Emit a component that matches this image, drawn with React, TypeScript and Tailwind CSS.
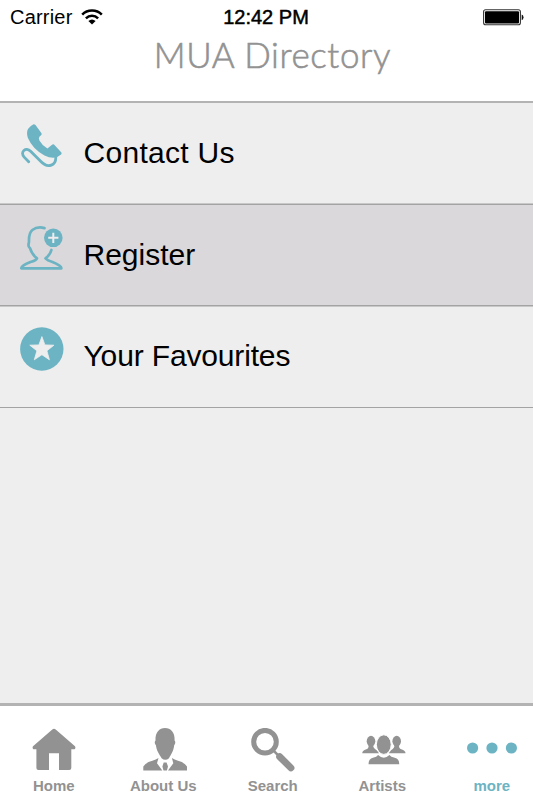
import type { ReactNode } from "react";

const sans = "font-['Liberation_Sans',Arial,sans-serif]";

function WifiIcon() {
  return (
    <svg className="block h-[16px] w-[22px]" viewBox="0 0 22 16" fill="none" stroke="#000" strokeWidth="2.5">
      <path d="M1.2 5.6C6.5.2 15.5.2 20.8 5.6" />
      <path d="M4.9 9.4C8.3 6 13.7 6 17.1 9.4" />
      <path d="M11 15.4 7.4 12Q11 9 14.6 12Z" fill="#000" stroke="none" />
    </svg>
  );
}

function BatteryIcon() {
  return (
    <svg className="block h-[17px] w-[41px]" viewBox="0 0 41 17">
      <rect x="0.6" y="0.8" width="36.8" height="15" rx="2" fill="#fff" stroke="#333" strokeWidth="1.1" />
      <rect x="2" y="2.2" width="34" height="12.2" rx="1" fill="#000" />
      <path d="M38.7 5.4Q40.5 6 40.5 8.3T38.7 11.2Z" fill="#111" />
    </svg>
  );
}

function PhoneIcon() {
  return (
    <svg className="ml-px block h-11 w-[42px]" viewBox="0 0 42 44">
      <path
        d="M12.6.3Q13.7.2 14.5 1L20.5 9.3Q21 10.3 20.3 11L18.6 12.4Q17.2 14 18.4 16.4Q21.2 21.5 26.4 24.4L31.4 20.4Q32.3 20 33 20.6L40.4 28.5Q41 29.5 40.1 30.4L36.2 33.1Q30.5 35 23.5 31.5Q11.8 25.4 6.8 13.8Q5.2 8.5 7 5Q8.5 2.3 12.6.3Z"
        fill="#6cb4c3"
      />
      <path
        d="M7.7 37.8 3.2 33.1C-1.5 28 5 22.4 9.6 27.2L19.4 37C27.2 45.5 35.5 41 34.7 32.5"
        fill="none"
        stroke="#6cb4c3"
        strokeWidth="2.8"
        strokeLinecap="round"
      />
    </svg>
  );
}

function RegisterIcon() {
  return (
    <svg className="block h-11 w-[43px]" viewBox="0 0 43 44">
      <g fill="none" stroke="#6cb4c3" strokeWidth="2.7" strokeLinejoin="round" strokeLinecap="round">
        <path d="M24.5 2.1Q17.5.1 12.3 4Q8.7 7 9 15.5L8.6 18.2Q8 20.5 10 22.2Q11.5 28 17 32.4Q16 34.5 10.5 36Q1.5 39.5 1.3 42.3H41.4Q41.2 39.5 32.5 36Q27.3 34.4 25.5 32.4Q30.2 28.8 31.4 24" />
      </g>
      <circle cx="33.3" cy="11.8" r="9.3" fill="#6cb4c3" />
      <path d="M28.2 11.8h10.2M33.3 6.7v10.2" stroke="#efebee" strokeWidth="2" />
    </svg>
  );
}

function FavouriteIcon() {
  return (
    <svg className="block h-11 w-11" viewBox="0 0 44 44">
      <circle cx="21.8" cy="22" r="21.7" fill="#6cb4c3" />
      <path
        d="M21.9 9.6 24.9 17.9 33.9 18.2 26.9 23.8 29.4 32.8 21.9 27.7 14.3 32.8 16.9 23.8 9.8 18.2 18.9 17.9Z"
        fill="#eee"
        stroke="#eee"
        strokeWidth=".8"
        strokeLinejoin="round"
      />
    </svg>
  );
}

function HomeIcon() {
  return (
    <svg className="ml-px block h-11 w-11" viewBox="0 0 44 44" fill="#929292">
      <path d="M20.3 1.4Q22 .2 23.7 1.4L43 18.3Q44 20 42.6 21.2H39.3V40Q39.3 42 37.3 42H27V25.2H17V42H6.4Q4.4 42 4.4 40V21.2H1.4Q0 20 1 18.3Z" />
    </svg>
  );
}

function AboutIcon() {
  return (
    <svg className="ml-[3px] block h-11 w-11" viewBox="0 0 44 44" fill="#929292">
      <path d="M22 0C27.8 0 32 4.4 31.6 12.4Q33.2 14.4 31.2 17.2C30.6 23 28 26.5 26 30.2Q22.3 33.4 18.6 30.2C16.5 26.5 13.6 23 12.9 17.2Q10.8 14.4 12.5 12.4C12.1 4.4 16.3 0 22 0Z" />
      <path d="M15.5 30 14 35.2 19.3 42.5H.3V38.5Q2.7 34.5 9.4 32.8Q13 31.8 15.5 30ZM28.9 30 30.3 35.2 25 42.5H44V38.5Q41.6 34.5 35 32.8Q31.5 31.8 28.9 30ZM20.7 34.5H23.6L25 38.5 23.9 42.5H20.5L19.4 38.5Z" />
    </svg>
  );
}

function SearchIcon() {
  return (
    <svg className="block h-11 w-11" viewBox="0 0 44 44" fill="none" stroke="#929292">
      <circle cx="14" cy="13.7" r="11.3" strokeWidth="5" />
      <path d="m22.5 22.7 5 5" strokeWidth="2.6" />
      <path d="m28.7 28.7 11.2 11.2" strokeWidth="7" strokeLinecap="round" />
    </svg>
  );
}

function ArtistsIcon() {
  return (
    <svg className="ml-[3px] block h-11 w-11" viewBox="0 0 44 44" fill="#929292">
      <ellipse cx="9" cy="13.2" rx="4.3" ry="5.4" />
      <ellipse cx="34.7" cy="13.2" rx="4.3" ry="5.4" />
      <path d="M6.5 17h4.8Q10.7 20 14.7 22.2L17 25.2H.3Q0 22.8 4.4 21.3Q7 20.3 6.5 17ZM32.3 17h4.8Q36.6 20.3 39.3 21.3Q43.6 22.8 43.5 25.2H26.8L29 22.2Q33 20 32.3 17Z" />
      <ellipse cx="21.8" cy="16.6" rx="7.4" ry="9.8" stroke="#fff" strokeWidth="1" />
      <path d="M16.1 27.1Q21.8 32.5 27.4 27.1Q28.8 29.2 32.7 29.8Q37.4 31 37.2 36.3H6.6Q6.3 31 11 29.8Q14.8 29.2 16.1 27.1Z" />
    </svg>
  );
}

function MoreIcon() {
  return (
    <svg className="block h-11 w-[50px]" viewBox="0 0 50 44" fill="#6cb4c3">
      <circle cx="5.6" cy="20" r="5.6" />
      <circle cx="25" cy="20" r="5.6" />
      <circle cx="44.4" cy="20" r="5.6" />
    </svg>
  );
}

function MenuRow({ icon, label, className }: { icon: ReactNode; label: string; className: string }) {
  return (
    <div className={`flex border-b border-[#a3a3a3] pl-5 ${className}`}>
      <div className="w-[63.5px] shrink-0 pt-[21px]">{icon}</div>
      <div className="pt-[31px] text-[30px] leading-[38px] text-black">{label}</div>
    </div>
  );
}

function Tab({ icon, label, className = "text-[#929292]" }: { icon: ReactNode; label: string; className?: string }) {
  return (
    <div className={`flex w-[109.5px] shrink-0 flex-col items-center pt-[22px] ${className}`}>
      {icon}
      <span className="mt-[5px] text-[15px] leading-[18px] font-bold">{label}</span>
    </div>
  );
}

export default function App() {
  return (
    <div className={`flex h-[800px] w-[533px] flex-col overflow-hidden bg-[#eee] ${sans}`}>
      <header className="h-[103px] shrink-0 border-b-2 border-[#b3b3b3] bg-white">
        <div className="grid h-[34px] grid-cols-3 items-center pr-[9px] pl-[10px] text-[20px] text-black">
          <div className="flex items-center gap-[8px]">
            <span className="tracking-[0.2px]">Carrier</span>
            <WifiIcon />
          </div>
          <span className="justify-self-center pr-[2px] [-webkit-text-stroke:0.5px_#000]">12:42 PM</span>
          <div className="justify-self-end">
            <BatteryIcon />
          </div>
        </div>
        <h1 className="-mt-px pl-[12px] text-center font-['Lato',sans-serif] text-[35px] leading-[42px] font-light tracking-[0.6px] whitespace-nowrap text-[#929292] [-webkit-text-stroke:0.6px_#929292]">
          MUA Directory
        </h1>
      </header>
      <main className="flex-1">
        <MenuRow
          icon={<PhoneIcon />}
          label="Contact Us"
          className="h-[102px] tracking-[0.3px] shadow-[inset_0_-1px_#c8c8c8]"
        />
        <MenuRow icon={<RegisterIcon />} label="Register" className="h-[101px] bg-[#dad8db]" />
        <MenuRow
          icon={<FavouriteIcon />}
          label="Your Favourites"
          className="h-[102px] tracking-[-0.15px] shadow-[inset_0_1px_#c8c8c8]"
        />
      </main>
      <nav className="flex h-[97px] shrink-0 border-t-3 border-[#b3b3b3] bg-white [&>*]:-translate-x-px">
        <Tab icon={<HomeIcon />} label="Home" />
        <Tab icon={<AboutIcon />} label="About Us" />
        <Tab icon={<SearchIcon />} label="Search" />
        <Tab icon={<ArtistsIcon />} label="Artists" />
        <Tab icon={<MoreIcon />} label="more" className="text-[#6cb4c3]" />
      </nav>
    </div>
  );
}
